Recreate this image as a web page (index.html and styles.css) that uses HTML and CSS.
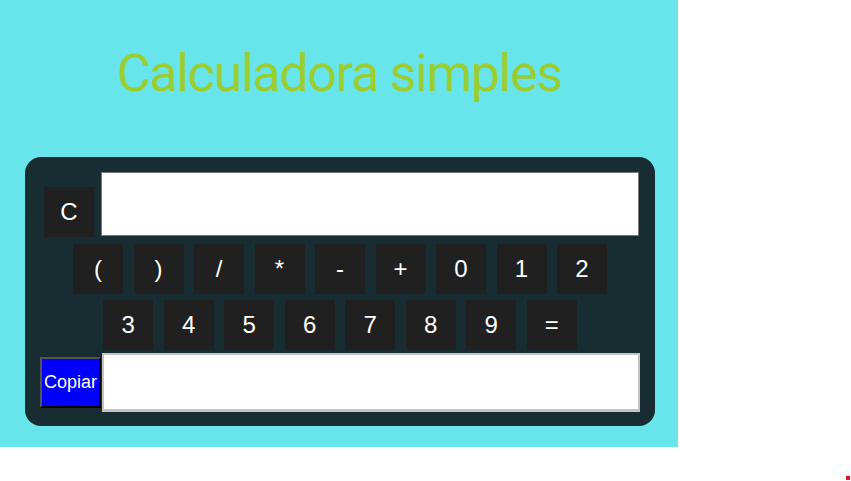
FILE: index.html
```html
<!DOCTYPE html>
<html lang="pt">
<head>
<meta charset="utf-8">
<title>Calculadora simples</title>
<link rel="stylesheet" href="styles.css">
</head>
<body>
<div class="app">
  <h1 class="title">Calculadora simples</h1>
  <div class="panel">
    <div class="row-top">
      <button class="key key-c">C</button>
      <input class="display" type="text">
    </div>
    <div class="keys keys-1">
      <button class="key">(</button>
      <button class="key">)</button>
      <button class="key">/</button>
      <button class="key">*</button>
      <button class="key">-</button>
      <button class="key">+</button>
      <button class="key">0</button>
      <button class="key">1</button>
      <button class="key">2</button>
    </div>
    <div class="keys keys-2">
      <button class="key">3</button>
      <button class="key">4</button>
      <button class="key">5</button>
      <button class="key">6</button>
      <button class="key">7</button>
      <button class="key">8</button>
      <button class="key">9</button>
      <button class="key">=</button>
    </div>
    <div class="row-copy">
      <button class="copy">Copiar</button>
      <input class="output" type="text">
    </div>
  </div>
</div>
<span class="dot"></span>
</body>
</html>
```
FILE: styles.css
```css
html, body {
  margin: 0;
  padding: 0;
  background: #ffffff;
}
body {
  font-family: "Liberation Sans", Arial, sans-serif;
}
.app {
  width: 678px;
  height: 447px;
  background: #68e5eb;
  padding-top: 48px;
  box-sizing: border-box;
}
.title {
  margin: 0;
  font-family: Roboto, "Liberation Sans", sans-serif;
  font-weight: 400;
  font-size: 52px;
  letter-spacing: -1.3px;
  line-height: 52px;
  color: #9acd32;
  text-align: center;
}
.panel {
  margin: 57px 0 0 25px;
  width: 630px;
  height: 269px;
  box-sizing: border-box;
  padding-top: 15px;
  background: #172d31;
  border-radius: 16px;
}
.row-top {
  display: flex;
  align-items: flex-start;
  gap: 7px;
  margin-left: 19px;
}
.key {
  width: 50px;
  height: 50px;
  padding: 0;
  border: none;
  background: #202020;
  color: #ffffff;
  font-family: "Liberation Sans", Arial, sans-serif;
  font-size: 24px;
  line-height: 50px;
  text-align: center;
}
.key-c {
  margin-top: 15px;
}
.display {
  width: 538px;
  height: 64px;
  box-sizing: border-box;
  border: 1px solid #767676;
  background: #ffffff;
  padding: 0;
  margin: 0;
}
.keys {
  display: flex;
  justify-content: center;
  gap: 10.5px;
}
.keys-1 {
  margin-top: 7px;
}
.keys-2 {
  margin-top: 6px;
}
.row-copy {
  display: flex;
  align-items: center;
  gap: 1px;
  margin-left: 15px;
  margin-top: 3px;
}
.copy {
  width: 61px;
  height: 51px;
  box-sizing: border-box;
  padding: 0;
  background: #0000ff;
  color: #ffffff;
  font-family: "Liberation Sans", Arial, sans-serif;
  font-size: 18px;
  border-style: solid;
  border-width: 2px;
  border-color: #555555 #000000 #000000 #555555;
}
.output {
  width: 538px;
  height: 59px;
  box-sizing: border-box;
  margin: 0;
  padding: 0;
  background: #ffffff;
  border-style: solid;
  border-color: #c4c4c4;
  border-width: 2px 2px 3px 2px;
}
.dot {
  position: absolute;
  left: 846px;
  top: 476px;
  width: 4px;
  height: 4px;
  background: #e4151b;
}
```
